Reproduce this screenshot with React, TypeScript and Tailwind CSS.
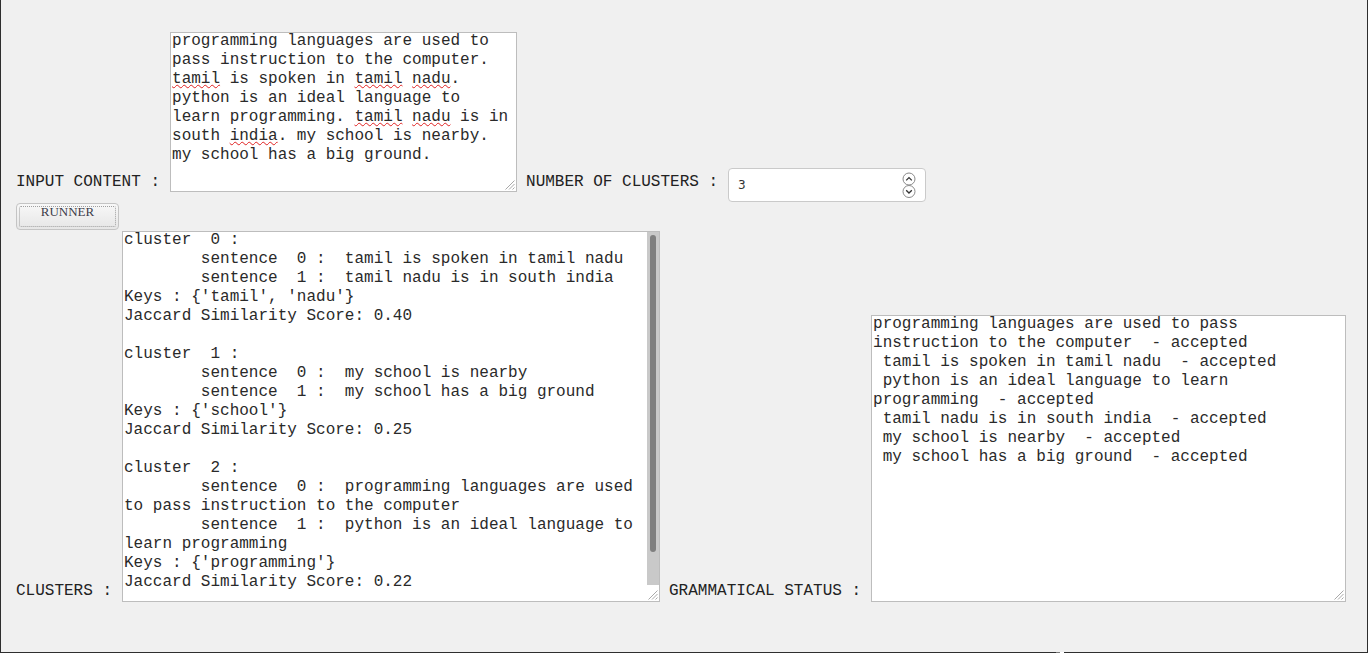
import React from 'react';

const mono = "font-['Liberation_Mono','Courier_New',monospace]";

// red spell-check squiggle under a word
function Sq({ children }: { children: React.ReactNode }) {
  return (
    <span className="underline decoration-wavy decoration-[#e02020] decoration-1 underline-offset-[1px]">
      {children}
    </span>
  );
}

function Grip() {
  return (
    <svg className="absolute bottom-px right-px" width="11" height="11" viewBox="0 0 11 11">
      <path d="M10.5 1.5 L1.5 10.5 M10.5 5 L5 10.5 M10.5 8.5 L8.5 10.5" stroke="#a8a8a8" strokeWidth="1" fill="none" />
    </svg>
  );
}

function Spinner() {
  return (
    <svg width="14" height="27" viewBox="0 0 14 27">
      <circle cx="7" cy="7" r="6" fill="#fff" stroke="#8a8a8a" />
      <circle cx="7" cy="19.5" r="6" fill="#fff" stroke="#8a8a8a" />
      <path d="M4.2 8.4 L7 5.6 L9.8 8.4" stroke="#333" strokeWidth="1.3" fill="none" />
      <path d="M4.2 18.2 L7 21 L9.8 18.2" stroke="#333" strokeWidth="1.3" fill="none" />
    </svg>
  );
}

const CLUSTER_LINES = [
  'cluster  0 :',
  '        sentence  0 :  tamil is spoken in tamil nadu',
  '        sentence  1 :  tamil nadu is in south india',
  "Keys : {'tamil', 'nadu'}",
  'Jaccard Similarity Score: 0.40',
  '',
  'cluster  1 :',
  '        sentence  0 :  my school is nearby',
  '        sentence  1 :  my school has a big ground',
  "Keys : {'school'}",
  'Jaccard Similarity Score: 0.25',
  '',
  'cluster  2 :',
  '        sentence  0 :  programming languages are used',
  'to pass instruction to the computer',
  '        sentence  1 :  python is an ideal language to',
  'learn programming',
  "Keys : {'programming'}",
  'Jaccard Similarity Score: 0.22',
  '',
];

const STATUS_LINES = [
  'programming languages are used to pass',
  'instruction to the computer  - accepted',
  ' tamil is spoken in tamil nadu  - accepted',
  ' python is an ideal language to learn',
  'programming  - accepted',
  ' tamil nadu is in south india  - accepted',
  ' my school is nearby  - accepted',
  ' my school has a big ground  - accepted',
];

export default function App() {
  return (
    <div className={`h-[653px] w-full bg-[#f0f0f0] border-x border-[#2e2e2e] flex flex-col ${mono} text-[16px] leading-[19px] text-[#222]`}>
      {/* input row */}
      <div className="flex items-end pl-[15px] pt-[32px]">
        <span className="mb-[10px] whitespace-pre">INPUT CONTENT :</span>
        <div className="relative ml-[10px] mb-[10px] w-[347px] h-[160px] border border-[#bdbdbd] bg-white pl-px overflow-hidden text-[#2a2a2a]">
          <div className="-mt-px whitespace-pre">
            <div>programming languages are used to</div>
            <div>pass instruction to the computer.</div>
            <div><Sq>tamil</Sq> is spoken in <Sq>tamil</Sq> <Sq>nadu</Sq>.</div>
            <div>python is an ideal language to</div>
            <div>learn programming. <Sq>tamil</Sq> <Sq>nadu</Sq> is in</div>
            <div>south <Sq>india</Sq>. my school is nearby.</div>
            <div>my school has a big ground.</div>
          </div>
          <Grip />
        </div>
        <span className="ml-[9px] mb-[10px] whitespace-pre">NUMBER OF CLUSTERS :</span>
        <div className="ml-[10px] w-[198px] h-[34px] rounded-[4px] border border-[#cacaca] bg-white flex items-center justify-between pl-[9px] pr-[9px]">
          <span className="font-['DejaVu_Sans',sans-serif] text-[12px] text-[#333]">3</span>
          <Spinner />
        </div>
      </div>

      {/* runner */}
      <div className="pl-[15px] mt-px">
        <button className="w-[103px] h-[27px] rounded-[4px] border border-[#c4c4c4] bg-gradient-to-b from-[#f8f8f8] to-[#e6e6e6] p-[2px]">
          <div className="h-full w-full border border-dotted border-[#a0a0a0] rounded-[2px] flex justify-center font-['Liberation_Serif',serif] text-[13px] leading-[9px] text-[#3d3d4a]">
            RUNNER
          </div>
        </button>
      </div>

      {/* results row */}
      <div className="flex items-end pl-[15px] mt-px">
        <span className="mb-px whitespace-pre">CLUSTERS :</span>
        <div className="ml-[10px] w-[538px] h-[371px] border border-[#bdbdbd] bg-white flex">
          <div className="flex-1 pl-px overflow-hidden text-[#2a2a2a]">
            <div className="-mt-px whitespace-pre">
              {CLUSTER_LINES.map((l, i) => (
                <div key={i} className="h-[19px]">{l}</div>
              ))}
            </div>
          </div>
          <div className="w-[12px] flex flex-col">
            <div className="flex-1 bg-[#c9c9c9] flex justify-center">
              <div className="mt-[3px] w-[6px] h-[317px] rounded-full bg-[#7f7f7f]" />
            </div>
            <div className="relative h-[16px] bg-white">
              <Grip />
            </div>
          </div>
        </div>
        <span className="ml-[9px] mb-px whitespace-pre">GRAMMATICAL STATUS :</span>
        <div className="relative ml-[10px] w-[475px] h-[287px] border border-[#bdbdbd] bg-white pl-px overflow-hidden text-[#2a2a2a]">
          <div className="-mt-px whitespace-pre">
            {STATUS_LINES.map((l, i) => (
              <div key={i} className="h-[19px]">{l}</div>
            ))}
          </div>
          <Grip />
        </div>
      </div>

      <div className="flex-1" />
      {/* bottom frame edge */}
      <div className="flex h-px">
        <div className="w-[1055px] bg-[#2e2e2e]" />
        <div className="w-[4px] bg-[#777]" />
        <div className="w-[4px] bg-white" />
        <div className="flex-1 bg-[#2e2e2e]" />
      </div>
    </div>
  );
}
